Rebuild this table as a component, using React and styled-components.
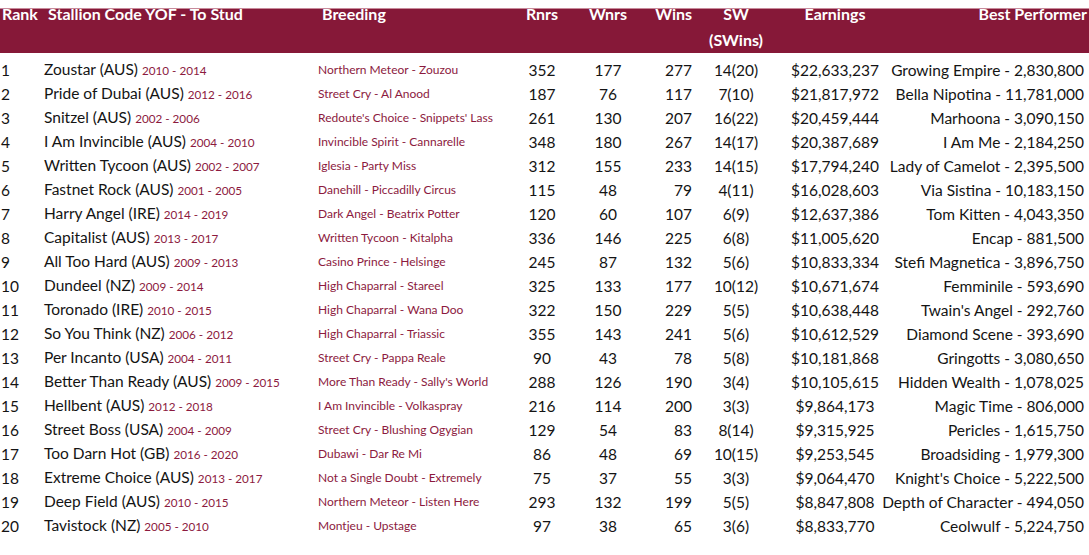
import styled, { createGlobalStyle } from "styled-components";

const GlobalStyle = createGlobalStyle`
  body {
    margin: 0;
    background: #ffffff;
    font-family: "Lato", "Liberation Sans", sans-serif;
    color: #141414;
  }
`;

const rows = [
  [1, "Zoustar (AUS)", "2010 - 2014", "Northern Meteor - Zouzou", 352, 177, 277, "14(20)", "$22,633,237", "Growing Empire - 2,830,800"],
  [2, "Pride of Dubai (AUS)", "2012 - 2016", "Street Cry - Al Anood", 187, 76, 117, "7(10)", "$21,817,972", "Bella Nipotina - 11,781,000"],
  [3, "Snitzel (AUS)", "2002 - 2006", "Redoute's Choice - Snippets' Lass", 261, 130, 207, "16(22)", "$20,459,444", "Marhoona - 3,090,150"],
  [4, "I Am Invincible (AUS)", "2004 - 2010", "Invincible Spirit - Cannarelle", 348, 180, 267, "14(17)", "$20,387,689", "I Am Me - 2,184,250"],
  [5, "Written Tycoon (AUS)", "2002 - 2007", "Iglesia - Party Miss", 312, 155, 233, "14(15)", "$17,794,240", "Lady of Camelot - 2,395,500"],
  [6, "Fastnet Rock (AUS)", "2001 - 2005", "Danehill - Piccadilly Circus", 115, 48, 79, "4(11)", "$16,028,603", "Via Sistina - 10,183,150"],
  [7, "Harry Angel (IRE)", "2014 - 2019", "Dark Angel - Beatrix Potter", 120, 60, 107, "6(9)", "$12,637,386", "Tom Kitten - 4,043,350"],
  [8, "Capitalist (AUS)", "2013 - 2017", "Written Tycoon - Kitalpha", 336, 146, 225, "6(8)", "$11,005,620", "Encap - 881,500"],
  [9, "All Too Hard (AUS)", "2009 - 2013", "Casino Prince - Helsinge", 245, 87, 132, "5(6)", "$10,833,334", "Stefi Magnetica - 3,896,750"],
  [10, "Dundeel (NZ)", "2009 - 2014", "High Chaparral - Stareel", 325, 133, 177, "10(12)", "$10,671,674", "Femminile - 593,690"],
  [11, "Toronado (IRE)", "2010 - 2015", "High Chaparral - Wana Doo", 322, 150, 229, "5(5)", "$10,638,448", "Twain's Angel - 292,760"],
  [12, "So You Think (NZ)", "2006 - 2012", "High Chaparral - Triassic", 355, 143, 241, "5(6)", "$10,612,529", "Diamond Scene - 393,690"],
  [13, "Per Incanto (USA)", "2004 - 2011", "Street Cry - Pappa Reale", 90, 43, 78, "5(8)", "$10,181,868", "Gringotts - 3,080,650"],
  [14, "Better Than Ready (AUS)", "2009 - 2015", "More Than Ready - Sally's World", 288, 126, 190, "3(4)", "$10,105,615", "Hidden Wealth - 1,078,025"],
  [15, "Hellbent (AUS)", "2012 - 2018", "I Am Invincible - Volkaspray", 216, 114, 200, "3(3)", "$9,864,173", "Magic Time - 806,000"],
  [16, "Street Boss (USA)", "2004 - 2009", "Street Cry - Blushing Ogygian", 129, 54, 83, "8(14)", "$9,315,925", "Pericles - 1,615,750"],
  [17, "Too Darn Hot (GB)", "2016 - 2020", "Dubawi - Dar Re Mi", 86, 48, 69, "10(15)", "$9,253,545", "Broadsiding - 1,979,300"],
  [18, "Extreme Choice (AUS)", "2013 - 2017", "Not a Single Doubt - Extremely", 75, 37, 55, "3(3)", "$9,064,470", "Knight's Choice - 5,222,500"],
  [19, "Deep Field (AUS)", "2010 - 2015", "Northern Meteor - Listen Here", 293, 132, 199, "5(5)", "$8,847,808", "Depth of Character - 494,050"],
  [20, "Tavistock (NZ)", "2005 - 2010", "Montjeu - Upstage", 97, 38, 65, "3(6)", "$8,833,770", "Ceolwulf - 5,224,750"],
];

// rank | stallion | breeding | rnrs | wnrs | wins | sw | earnings | best
const columns = "44px 274px 194px 60px 72px 48px 88px 110px minmax(0, 1fr)";

export default function App() {
  return (
    <>
      <GlobalStyle />
      <Page>
        <HeaderBand>
          <HeaderRow>
            <HeadCell $pad="2px">Rank</HeadCell>
            <HeadCell $pad="4px">Stallion Code YOF - To Stud</HeadCell>
            <HeadCell $pad="4px">Breeding</HeadCell>
            <HeadCell $align="center">Rnrs</HeadCell>
            <HeadCell $align="center" $shift="-4px">Wnrs</HeadCell>
            <HeadCell $align="right">Wins</HeadCell>
            <HeadCell $align="center">
              SW
              <SubLine>(SWins)</SubLine>
            </HeadCell>
            <HeadCell $align="center">Earnings</HeadCell>
            <HeadCell $align="right" $shift="3px">
              Best Performer
            </HeadCell>
          </HeaderRow>
        </HeaderBand>
        <Body>
          {rows.map((r) => (
            <Row key={r[0]}>
              <Cell $pad="1px">{r[0]}</Cell>
              <Cell>
                {r[1]} <Years>{r[2]}</Years>
              </Cell>
              <Breeding>{r[3]}</Breeding>
              <Cell $align="center">{r[4]}</Cell>
              <Cell $align="center">{r[5]}</Cell>
              <Cell $align="right">{r[6]}</Cell>
              <Cell $align="center">{r[7]}</Cell>
              <Cell $align="center">{r[8]}</Cell>
              <Best>{r[9]}</Best>
            </Row>
          ))}
        </Body>
      </Page>
    </>
  );
}

const Page = styled.div`
  width: 1089px;
  height: 555px;
  padding-top: 8px;
  box-sizing: border-box;
  overflow: hidden;
`;

const HeaderBand = styled.div`
  height: 45px;
  background-color: #861838;
  border-top: 1px solid #c88a9b;
  box-sizing: border-box;
`;

const HeaderRow = styled.div`
  display: grid;
  grid-template-columns: ${columns};
  padding-right: 5px;
`;

const HeadCell = styled.div`
  color: #ffffff;
  font-weight: 700;
  font-size: 16px;
  line-height: 8px;
  white-space: nowrap;
  text-align: ${(p) => p.$align || "left"};
  padding-left: ${(p) => p.$pad || "0"};
  margin-right: ${(p) => (p.$shift ? "-" + p.$shift : "0")};
  padding-top: 1px;
`;

const SubLine = styled.div`
  margin-top: 18px;
`;

const Body = styled.div`
  padding-top: 4px;
`;

const Row = styled.div`
  display: grid;
  grid-template-columns: ${columns};
  padding-right: 5px;
  height: 24px;
  align-items: center;
`;

const Cell = styled.div`
  font-size: 15.5px;
  line-height: 24px;
  white-space: nowrap;
  text-align: ${(p) => p.$align || "left"};
  padding-left: ${(p) => p.$pad || "0"};
`;

const Years = styled.span`
  font-size: 11.7px;
  color: #8c1a3e;
`;

const Breeding = styled.div`
  font-size: 12px;
  color: #8c1a3e;
  line-height: 24px;
  white-space: nowrap;
`;

const Best = styled.div`
  font-size: 15.5px;
  line-height: 24px;
  white-space: nowrap;
  display: flex;
  justify-content: flex-end;
`;
